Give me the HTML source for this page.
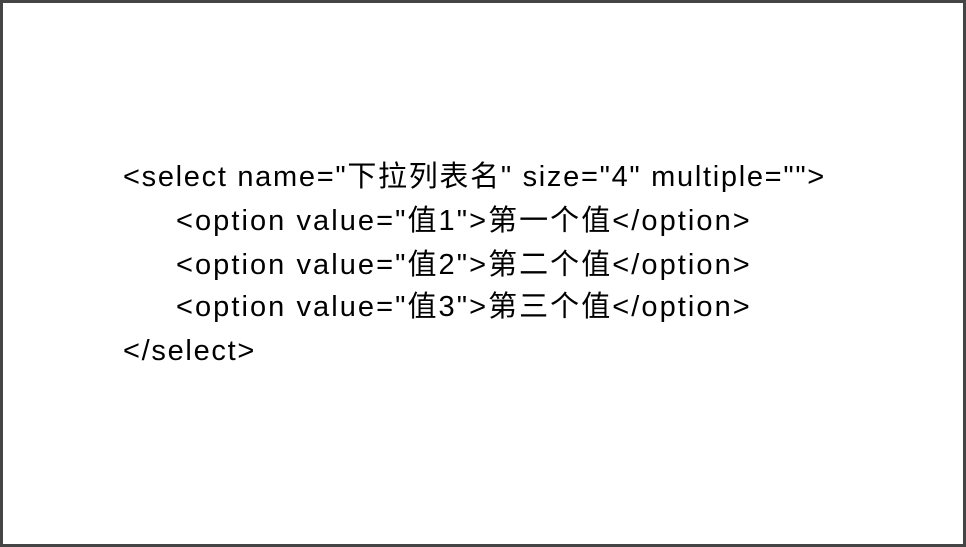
<!DOCTYPE html>
<html><head><meta charset="utf-8"><style>
html,body{margin:0;padding:0;background:#fff}
body{width:966px;height:547px;position:relative;overflow:hidden}
.frame{position:absolute;left:0;top:0;width:960px;height:541px;border:3px solid #454545;background:#fff}
.l{position:absolute;white-space:pre;font-family:"Liberation Sans","Noto Sans CJK SC",sans-serif;font-size:29px;line-height:44px;color:#000;letter-spacing:1.7px}
.o{letter-spacing:2.06px}
</style></head><body>
<div class="frame"></div>
<div class="l" style="left:123px;top:155px">&lt;select name="下拉列表名" size="4" multiple=""&gt;</div>
<div class="l o" style="left:176px;top:199px">&lt;option value="值1"&gt;第一个值&lt;/option&gt;</div>
<div class="l o" style="left:176px;top:243px">&lt;option value="值2"&gt;第二个值&lt;/option&gt;</div>
<div class="l o" style="left:176px;top:285px">&lt;option value="值3"&gt;第三个值&lt;/option&gt;</div>
<div class="l" style="left:123px;top:329px">&lt;/select&gt;</div>
</body></html>
